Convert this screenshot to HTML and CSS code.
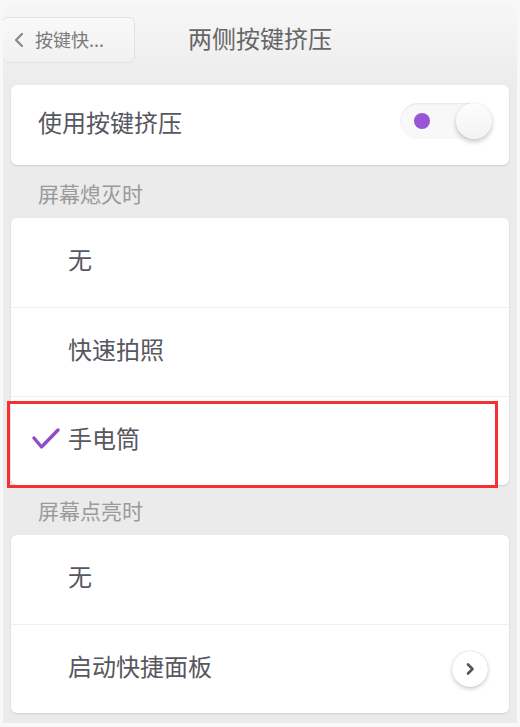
FILE: index.html
```html
<!DOCTYPE html>
<html lang="zh">
<head>
  <meta charset="UTF-8">
  <meta name="viewport" content="width=device-width, initial-scale=1.0">
  <title>两侧按键挤压</title>
  <link rel="stylesheet" href="styles.css">
</head>
<body>
<div class="screen">
  <div class="header">
    <button class="back">
      <svg width="12" height="16" viewBox="0 0 12 16"><path d="M9 2 L3 8 L9 14" fill="none" stroke="#888" stroke-width="2.2" stroke-linecap="round" stroke-linejoin="round"/></svg>
      <span>按键快...</span>
    </button>
    <h1 class="title">两侧按键挤压</h1>
  </div>

  <div class="content">
    <div class="card">
      <div class="row row-main">
        <span class="label">使用按键挤压</span>
        <div class="switch">
          <span class="dot"></span>
          <span class="knob"></span>
        </div>
      </div>
    </div>

    <div class="section section-first">屏幕熄灭时</div>
    <div class="card">
      <div class="row option">
        <span class="check"></span>
        <span class="label">无</span>
      </div>
      <div class="row option">
        <span class="check"></span>
        <span class="label">快速拍照</span>
      </div>
      <div class="row option selected">
        <span class="check">
          <svg width="28" height="24" viewBox="0 0 28 24"><path d="M2 11 L9.5 20 L26 3" fill="none" stroke="#8b4fca" stroke-width="3.4" stroke-linecap="round" stroke-linejoin="round"/></svg>
        </span>
        <span class="label">手电筒</span>
        <div class="mark"></div>
      </div>
    </div>

    <div class="section">屏幕点亮时</div>
    <div class="card">
      <div class="row option">
        <span class="check"></span>
        <span class="label">无</span>
      </div>
      <div class="row option">
        <span class="check"></span>
        <span class="label">启动快捷面板</span>
        <span class="go">
          <svg width="12" height="14" viewBox="0 0 12 14"><path d="M4 2.5 L8.5 7 L4 11.5" fill="none" stroke="#555" stroke-width="2.6" stroke-linecap="round" stroke-linejoin="round"/></svg>
        </span>
      </div>
    </div>
  </div>
</div>
</body>
</html>
```

FILE: styles.css
```css
body {
  margin: 0;
  background: #fff;
  font-family: "Noto Sans CJK SC", "Noto Sans", sans-serif;
}
.screen {
  box-sizing: border-box;
  width: 520px;
  height: 727px;
  overflow: hidden;
  border: 3px solid #f8f8f8;
  border-bottom-width: 4px;
  background: #ebebeb;
}

.header {
  box-sizing: border-box;
  height: 82px;
  padding-top: 14px;
  display: grid;
  grid-template-columns: 1fr auto 1fr;
  align-items: start;
  background: linear-gradient(#f7f7f7, #ececec);
}
.back {
  justify-self: start;
  display: flex;
  align-items: center;
  gap: 10px;
  box-sizing: border-box;
  width: 133px;
  height: 46px;
  margin-left: -1px;
  padding: 0 0 3px 10px;
  border: 1px solid #e2e2e2;
  border-radius: 6px;
  background: linear-gradient(#f9f9f9, #f1f1f1);
  color: #7a7a7a;
  font-family: inherit;
  font-size: 18px;
}
.back svg {
  margin-top: 3px;
}
.title {
  margin: -2px 0 0;
  line-height: 46px;
  font-size: 24px;
  font-weight: 400;
  color: #666;
}

.content {
  padding: 0 8px;
}
.card {
  background: #fff;
  border-radius: 6px;
  box-shadow: 0 1px 2px rgba(0, 0, 0, 0.12);
}
.row {
  position: relative;
  display: flex;
  align-items: center;
  height: 89px;
  border-top: 1px solid #efefef;
  box-sizing: border-box;
}
.row:first-child {
  border-top: none;
}
.label {
  margin-top: -8px;
  font-size: 24px;
  color: #57575f;
}

.row-main {
  height: 80px;
  padding: 0 17px 0 27px;
  justify-content: space-between;
}
.switch {
  box-sizing: border-box;
  width: 92px;
  height: 36px;
  margin-top: -9px;
  padding-left: 14px;
  display: flex;
  align-items: center;
  justify-content: space-between;
  border-radius: 18px;
  background: #f8f8f8;
  box-shadow: inset 0 1px 2px rgba(0, 0, 0, 0.08);
}
.dot {
  width: 16px;
  height: 16px;
  border-radius: 50%;
  background: #9a55d6;
}
.knob {
  width: 36px;
  height: 36px;
  border-radius: 50%;
  background: linear-gradient(#fdfdfd, #f3f3f3);
  box-shadow: 0 3px 5px rgba(0, 0, 0, 0.2), 0 0 1px rgba(0, 0, 0, 0.2);
}

.option {
  padding: 0 21px;
  gap: 8px;
}
.check {
  display: flex;
  width: 28px;
  height: 24px;
  margin-top: -4px;
}
.go {
  margin-left: auto;
  display: flex;
  align-items: center;
  justify-content: center;
  width: 36px;
  height: 36px;
  border-radius: 50%;
  background: #fff;
  box-shadow: 0 2px 4px rgba(0, 0, 0, 0.18), 0 0 1px rgba(0, 0, 0, 0.25);
}
.mark {
  position: absolute;
  left: -4px;
  top: 4px;
  width: 491px;
  height: 87px;
  box-sizing: border-box;
  border: 3px solid #f5302f;
}

.section {
  box-sizing: border-box;
  height: 50px;
  padding: 14px 0 0 27px;
  font-size: 21px;
  line-height: 22px;
  color: #9a9a9a;
}
.section-first {
  height: 53px;
  padding-top: 17px;
}
```
